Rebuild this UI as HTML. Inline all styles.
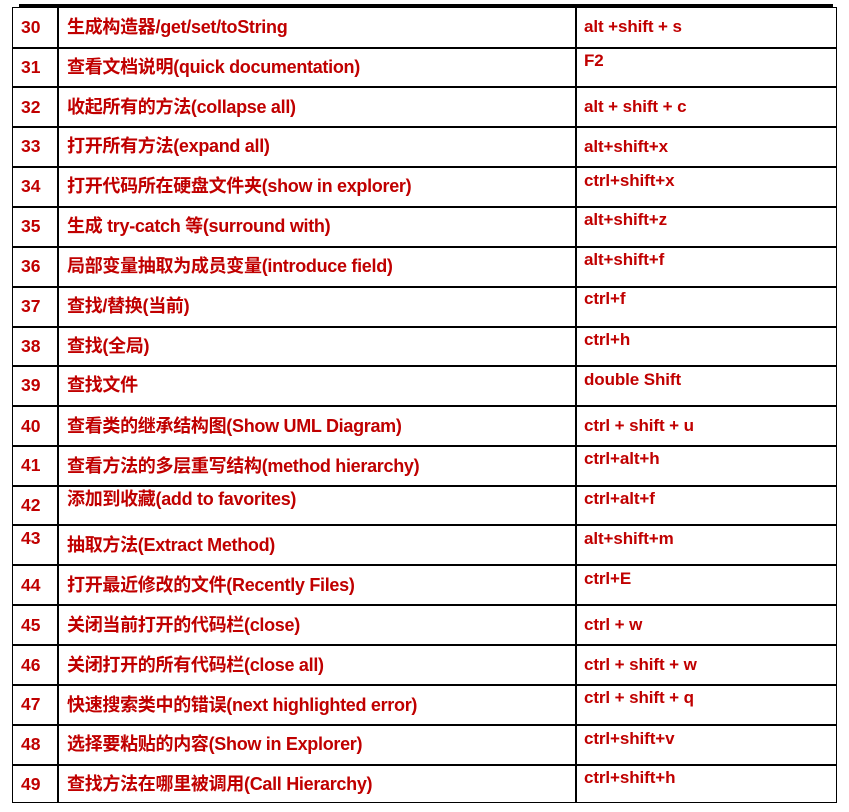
<!DOCTYPE html>
<html><head><meta charset="utf-8"><style>
body{margin:0;width:849px;height:812px;background:#fff;position:relative;overflow:hidden;font-family:"Liberation Sans","Noto Sans CJK SC",sans-serif;font-weight:bold;color:#c00000}
.top{position:absolute;left:19px;top:4px;width:814px;height:3px;background:#000}
.tb{position:absolute;left:12px;top:7px;width:825px;height:796px;border:1.5px solid #000;box-sizing:border-box}
.v{position:absolute;top:7px;height:796px;width:1.5px;background:#000}
.h{position:absolute;left:12px;width:825px;height:1.5px;background:#000}
.r{position:absolute;left:0;width:849px;height:40px}
.r span{position:absolute;line-height:20px;white-space:nowrap}
.n{left:21px;font-size:17.5px}
.t{left:67px;font-size:18px;letter-spacing:-0.3px}
.s{left:584px;font-size:17px;letter-spacing:-0.1px}
</style></head><body>
<div class="top"></div>
<div class="tb"></div>
<div class="v" style="left:57px"></div>
<div class="v" style="left:575px"></div>
<div class="h" style="top:47px"></div><div class="h" style="top:86px"></div><div class="h" style="top:126px"></div><div class="h" style="top:166px"></div><div class="h" style="top:206px"></div><div class="h" style="top:246px"></div><div class="h" style="top:286px"></div><div class="h" style="top:326px"></div><div class="h" style="top:365px"></div><div class="h" style="top:405px"></div><div class="h" style="top:445px"></div><div class="h" style="top:485px"></div><div class="h" style="top:524px"></div><div class="h" style="top:564px"></div><div class="h" style="top:604px"></div><div class="h" style="top:644px"></div><div class="h" style="top:684px"></div><div class="h" style="top:724px"></div><div class="h" style="top:764px"></div>

<div class="r" style="top:7px"><span class="n" style="top:10px">30</span><span class="t" style="top:10px">生成构造器/get/set/toString</span><span class="s" style="top:10px">alt +shift + s</span></div>
<div class="r" style="top:47px"><span class="n" style="top:10px">31</span><span class="t" style="top:10px">查看文档说明(quick documentation)</span><span class="s" style="top:4px">F2</span></div>
<div class="r" style="top:86px"><span class="n" style="top:11px">32</span><span class="t" style="top:11px">收起所有的方法(collapse all)</span><span class="s" style="top:11px">alt + shift + c</span></div>
<div class="r" style="top:126px"><span class="n" style="top:10px">33</span><span class="t" style="top:10px">打开所有方法(expand all)</span><span class="s" style="top:11px">alt+shift+x</span></div>
<div class="r" style="top:166px"><span class="n" style="top:10px">34</span><span class="t" style="top:10px">打开代码所在硬盘文件夹(show in explorer)</span><span class="s" style="top:5px">ctrl+shift+x</span></div>
<div class="r" style="top:206px"><span class="n" style="top:10px">35</span><span class="t" style="top:10px">生成 try-catch 等(surround with)</span><span class="s" style="top:4px">alt+shift+z</span></div>
<div class="r" style="top:246px"><span class="n" style="top:10px">36</span><span class="t" style="top:10px">局部变量抽取为成员变量(introduce field)</span><span class="s" style="top:4px">alt+shift+f</span></div>
<div class="r" style="top:286px"><span class="n" style="top:10px">37</span><span class="t" style="top:10px">查找/替换(当前)</span><span class="s" style="top:3px">ctrl+f</span></div>
<div class="r" style="top:326px"><span class="n" style="top:10px">38</span><span class="t" style="top:10px">查找(全局)</span><span class="s" style="top:4px">ctrl+h</span></div>
<div class="r" style="top:365px"><span class="n" style="top:10px">39</span><span class="t" style="top:10px">查找文件</span><span class="s" style="top:5px">double Shift</span></div>
<div class="r" style="top:405px"><span class="n" style="top:11px">40</span><span class="t" style="top:11px">查看类的继承结构图(Show UML Diagram)</span><span class="s" style="top:11px">ctrl + shift + u</span></div>
<div class="r" style="top:445px"><span class="n" style="top:10px">41</span><span class="t" style="top:11px">查看方法的多层重写结构(method hierarchy)</span><span class="s" style="top:4px">ctrl+alt+h</span></div>
<div class="r" style="top:485px"><span class="n" style="top:10px">42</span><span class="t" style="top:4px">添加到收藏(add to favorites)</span><span class="s" style="top:4px">ctrl+alt+f</span></div>
<div class="r" style="top:524px"><span class="n" style="top:4px">43</span><span class="t" style="top:11px">抽取方法(Extract Method)</span><span class="s" style="top:5px">alt+shift+m</span></div>
<div class="r" style="top:564px"><span class="n" style="top:11px">44</span><span class="t" style="top:11px">打开最近修改的文件(Recently Files)</span><span class="s" style="top:5px">ctrl+E</span></div>
<div class="r" style="top:604px"><span class="n" style="top:11px">45</span><span class="t" style="top:11px">关闭当前打开的代码栏(close)</span><span class="s" style="top:11px">ctrl + w</span></div>
<div class="r" style="top:644px"><span class="n" style="top:11px">46</span><span class="t" style="top:11px">关闭打开的所有代码栏(close all)</span><span class="s" style="top:11px">ctrl + shift + w</span></div>
<div class="r" style="top:684px"><span class="n" style="top:10px">47</span><span class="t" style="top:11px">快速搜索类中的错误(next highlighted error)</span><span class="s" style="top:4px">ctrl + shift + q</span></div>
<div class="r" style="top:724px"><span class="n" style="top:10px">48</span><span class="t" style="top:10px">选择要粘贴的内容(Show in Explorer)</span><span class="s" style="top:5px">ctrl+shift+v</span></div>
<div class="r" style="top:764px"><span class="n" style="top:10px">49</span><span class="t" style="top:10px">查找方法在哪里被调用(Call Hierarchy)</span><span class="s" style="top:4px">ctrl+shift+h</span></div>
</body></html>
